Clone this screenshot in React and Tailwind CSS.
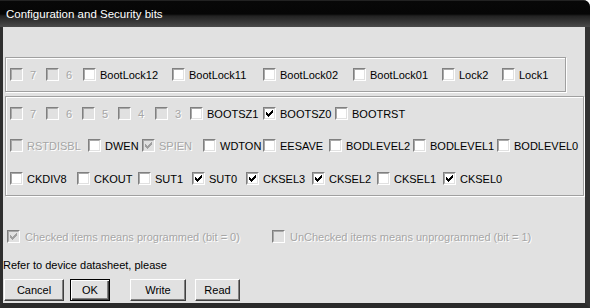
import React from "react";

const dim = "text-[#a6a6a6] [text-shadow:1px_1px_0_#ffffff]";

const lockRow = [
    { label: "\u00a07", w: "w-[36px]", off: true },
    { label: "\u00a06", w: "w-[37px]", off: true },
    { label: "BootLock12", w: "w-[89px]" },
    { label: "BootLock11", w: "w-[91px]" },
    { label: "BootLock02", w: "w-[90px]" },
    { label: "BootLock01", w: "w-[89px]" },
    { label: "Lock2", w: "w-[60px]" },
    { label: "Lock1", w: "w-[60px]" }
];

const highRow = [
    { label: "\u00a07", w: "w-[36px]", off: true },
    { label: "\u00a06", w: "w-[36px]", off: true },
    { label: "\u00a05", w: "w-[36px]", off: true },
    { label: "\u00a04", w: "w-[37px]", off: true },
    { label: "\u00a03", w: "w-[35px]", off: true },
    { label: "BOOTSZ1", w: "w-[73px]" },
    { label: "BOOTSZ0", w: "w-[72px]", on: true },
    { label: "BOOTRST", w: "w-[80px]" }
];

const extRow = [
    { label: "RSTDISBL", w: "w-[78px]", off: true },
    { label: "DWEN", w: "w-[54px]" },
    { label: "SPIEN", w: "w-[61px]", off: true, on: true },
    { label: "WDTON", w: "w-[60px]", clip: true },
    { label: "EESAVE", w: "w-[66px]" },
    { label: "BODLEVEL2", w: "w-[84px]" },
    { label: "BODLEVEL1", w: "w-[84px]" },
    { label: "BODLEVEL0", w: "w-[80px]" }
];

const lowRow = [
    { label: "CKDIV8", w: "w-[67px]" },
    { label: "CKOUT", w: "w-[61px]" },
    { label: "SUT1", w: "w-[54px]" },
    { label: "SUT0", w: "w-[54px]", on: true },
    { label: "CKSEL3", w: "w-[66px]", on: true },
    { label: "CKSEL2", w: "w-[65px]", on: true },
    { label: "CKSEL1", w: "w-[66px]" },
    { label: "CKSEL0", w: "w-[66px]", on: true }
];

function Check({ on, off }) {
    return (
        <span className="block h-[13px] w-[13px] shrink-0 border border-b-white border-l-[#808080] border-r-white border-t-[#808080]">
            <span className={`block h-full w-full border border-b-[#e1e1e1] border-l-[#a8a8a8] border-r-[#e1e1e1] border-t-[#a8a8a8] ${off ? "bg-[#e1e1e1]" : "bg-white"}`}>
                {on && (
                    <svg width="9" height="9" viewBox="0 0 9 9" className="block" shapeRendering="crispEdges">
                        <path
                            d="M7 1h1v1h-1z M6 2h2v1h-2z M1 3h1v1h-1z M5 3h3v1h-3z M1 4h2v1h-2z M4 4h3v1h-3z M1 5h5v1h-5z M2 6h3v1h-3z M3 7h1v1h-1z"
                            fill={off ? "#a0a0a0" : "#000000"}
                        />
                    </svg>
                )}
            </span>
        </span>
    );
}

function Item({ label, w, on, off, clip, gap = "ml-[4px]" }) {
    return (
        <div className={`flex shrink-0 items-start ${w} ${clip ? "overflow-hidden" : ""}`}>
            <Check on={on} off={off} />
            <span className={`${gap} whitespace-nowrap pt-px text-[11px] leading-[13px] ${off ? dim : "text-black"}`}>
                {label}
            </span>
        </div>
    );
}

function Row({ items, className = "" }) {
    return (
        <div className={`flex ${className}`}>
            {items.map((it) => (
                <Item key={it.label} {...it} />
            ))}
        </div>
    );
}

function Button({ children, w, def, className = "" }) {
    return (
        <button
            type="button"
            className={`flex h-[22px] items-center justify-center bg-[#e1e1e1] text-[11px] leading-[13px] text-black ${w} ${className} ${
                def
                    ? "border border-black shadow-[inset_1px_1px_0_#ffffff,inset_-1px_-1px_0_#404040,inset_-2px_-2px_0_#808080]"
                    : "border border-b-[#404040] border-l-white border-r-[#404040] border-t-white shadow-[inset_-1px_-1px_0_#808080]"
            }`}
        >
            {children}
        </button>
    );
}

export default function App() {
    return (
        <div className="h-[308px] w-[590px] bg-white font-['Liberation_Sans',Arial,sans-serif]">
            <div className="flex h-full w-full flex-col overflow-hidden rounded-tr-[7px] bg-[#262626]">

                <div className="h-[27px] shrink-0 bg-[linear-gradient(to_bottom,#3c3c3c_0px,#080808_1px,#060606_14px,#222222_16px,#4a4a4a_27px)] pl-[6px] pt-[7px]">
                    <span className="block text-[11.5px] leading-[14px] text-white">
                        Configuration and Security bits
                    </span>
                </div>

                <div className="flex flex-1 border-b-[5px] border-l-[3px] border-r-[5px] border-b-[#2a2a2a] border-l-[#2e2e2e] border-r-[#333333]">
                    <div className="flex flex-1 flex-col bg-[#e1e1e1]">

                        <div className="ml-[2px] mt-[30px] h-[35px] w-[561px] border border-[#a0a0a0] pl-[4px] pt-[10px] shadow-[inset_1px_1px_0_#ffffff,1px_1px_0_#ffffff]">
                            <Row items={lockRow} />
                        </div>

                        <div className="ml-[2px] mt-[4px] h-[100px] w-[579px] border border-[#a0a0a0] pl-[4px] pt-[10px] shadow-[inset_1px_1px_0_#ffffff,1px_1px_0_#ffffff]">
                            <Row items={highRow} />
                            <Row items={extRow} className="mt-[18px]" />
                            <Row items={lowRow} className="mt-[19px]" />
                        </div>

                        <div className="mt-[34px] flex pl-[4px]">
                            <Item label="Checked items means programmed (bit = 0)" w="w-[265px]" on off gap="ml-[5px]" />
                            <Item label="UnChecked items means unprogrammed (bit = 1)" w="w-[260px]" off gap="ml-[5px]" />
                        </div>

                        <p className="mt-[15px] text-[11px] leading-[13px] text-black">
                            Refer to device datasheet, please
                        </p>

                        <div className="mt-[7px] flex pl-[1px]">
                            <Button w="w-[60px]">Cancel</Button>
                            <Button w="w-[40px]" def className="ml-[6px]">OK</Button>
                            <Button w="w-[56px]" className="ml-[20px]">Write</Button>
                            <Button w="w-[45px]" className="ml-[9px]">Read</Button>
                        </div>

                    </div>
                </div>

            </div>
        </div>
    );
}
